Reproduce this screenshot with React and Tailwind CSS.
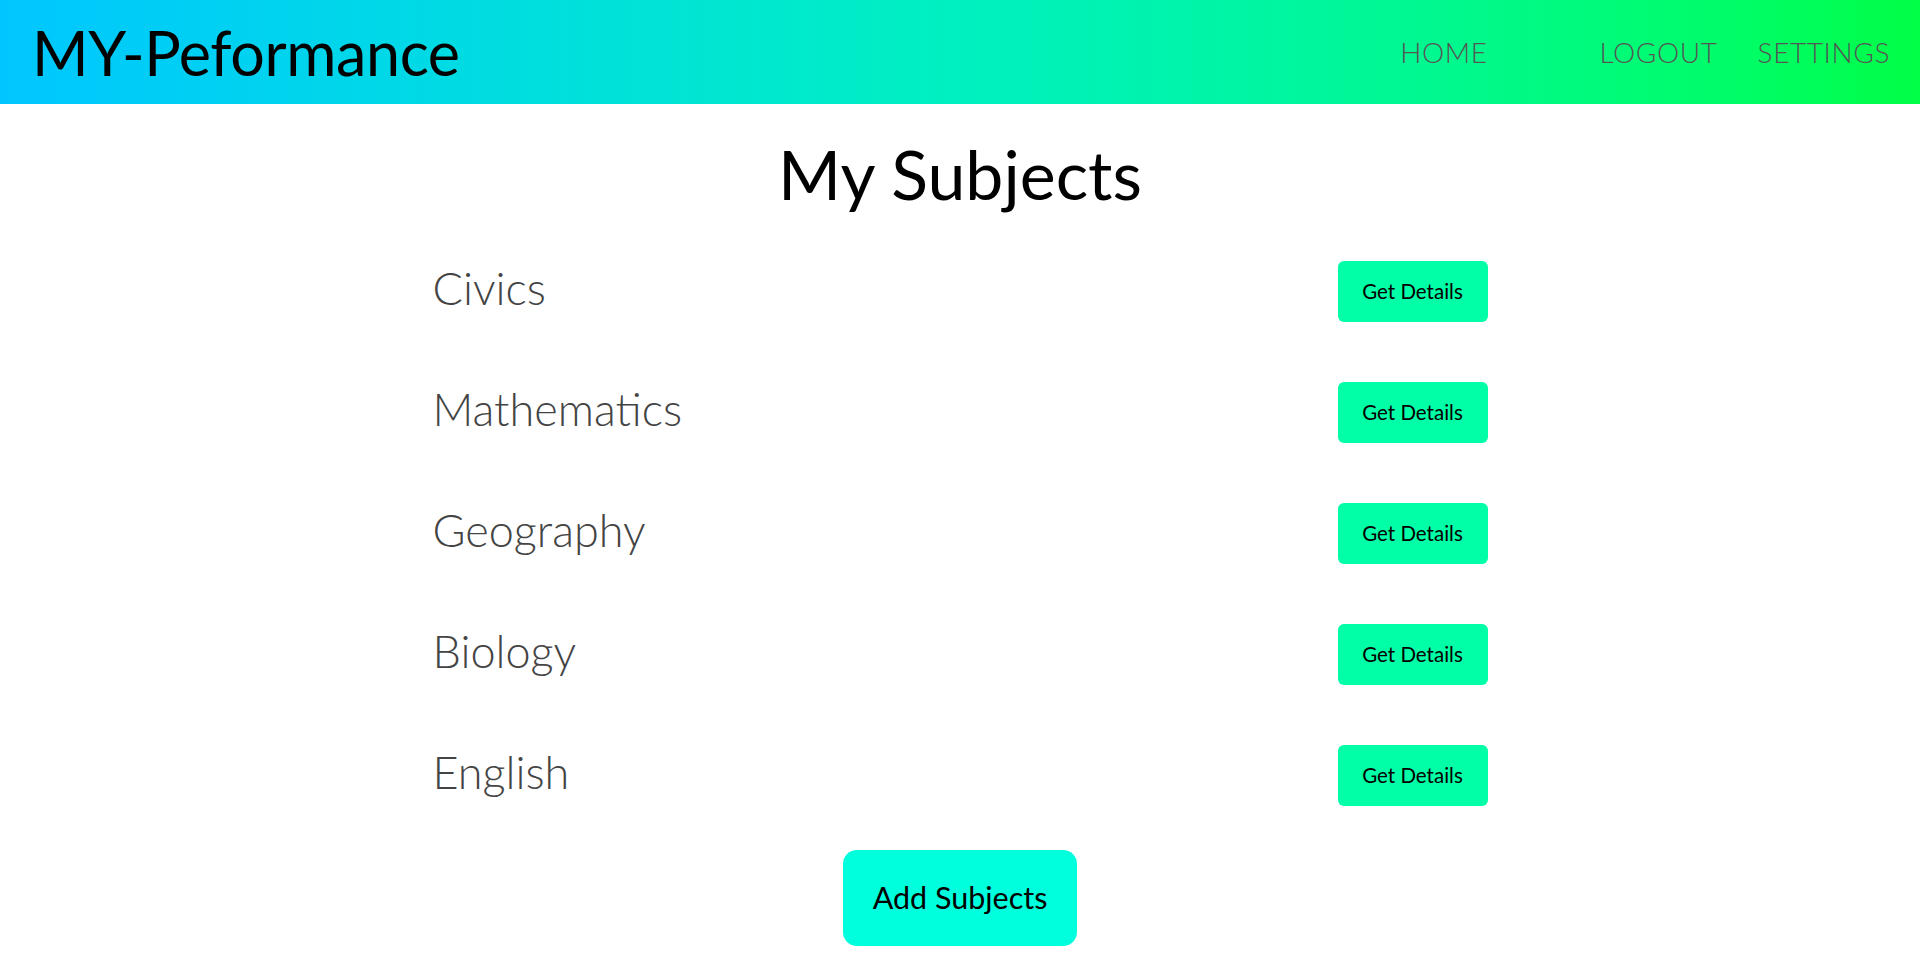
const subjects = ['Civics', 'Mathematics', 'Geography', 'Biology', 'English'];

export default function App() {
  return (
    <div className="min-h-screen bg-white font-['Lato','Noto_Sans',sans-serif]">
      <header className="h-[104px] flex items-center justify-between bg-gradient-to-r from-[#00c6ff] via-[#00f0c0] to-[#00ff44] pl-[32px] pr-[30px]">
        <h1 className="text-[61px] leading-none text-black font-normal tracking-[-0.4px]">MY-Peformance</h1>
        <nav className="flex items-center text-[28px] font-light text-[#555555] tracking-[0.6px]">
          <a className="mr-[112px]">HOME</a>
          <a className="mr-[40px]">LOGOUT</a>
          <a>SETTINGS</a>
        </nav>
      </header>

      <main className="flex flex-col items-center">
        <h2 className="mt-[30px] text-[68px] leading-[80px] text-black font-normal">My Subjects</h2>
        <ul className="w-[1055px] mt-[47px] flex flex-col gap-[60px]">
          {subjects.map(s => (
            <li key={s} className="flex items-center justify-between h-[61px]">
              <span className="text-[45px] font-light text-[#444444] leading-none pb-[6px]">{s}</span>
              <button className="w-[150px] h-[61px] rounded-[6px] bg-[#00ffa6] text-[20.5px] text-black">Get Details</button>
            </li>
          ))}
        </ul>
        <button className="mt-[44px] w-[234px] h-[96px] rounded-[14px] bg-[#00ffdd] text-[30.5px] text-black">Add Subjects</button>
      </main>
    </div>
  );
}
